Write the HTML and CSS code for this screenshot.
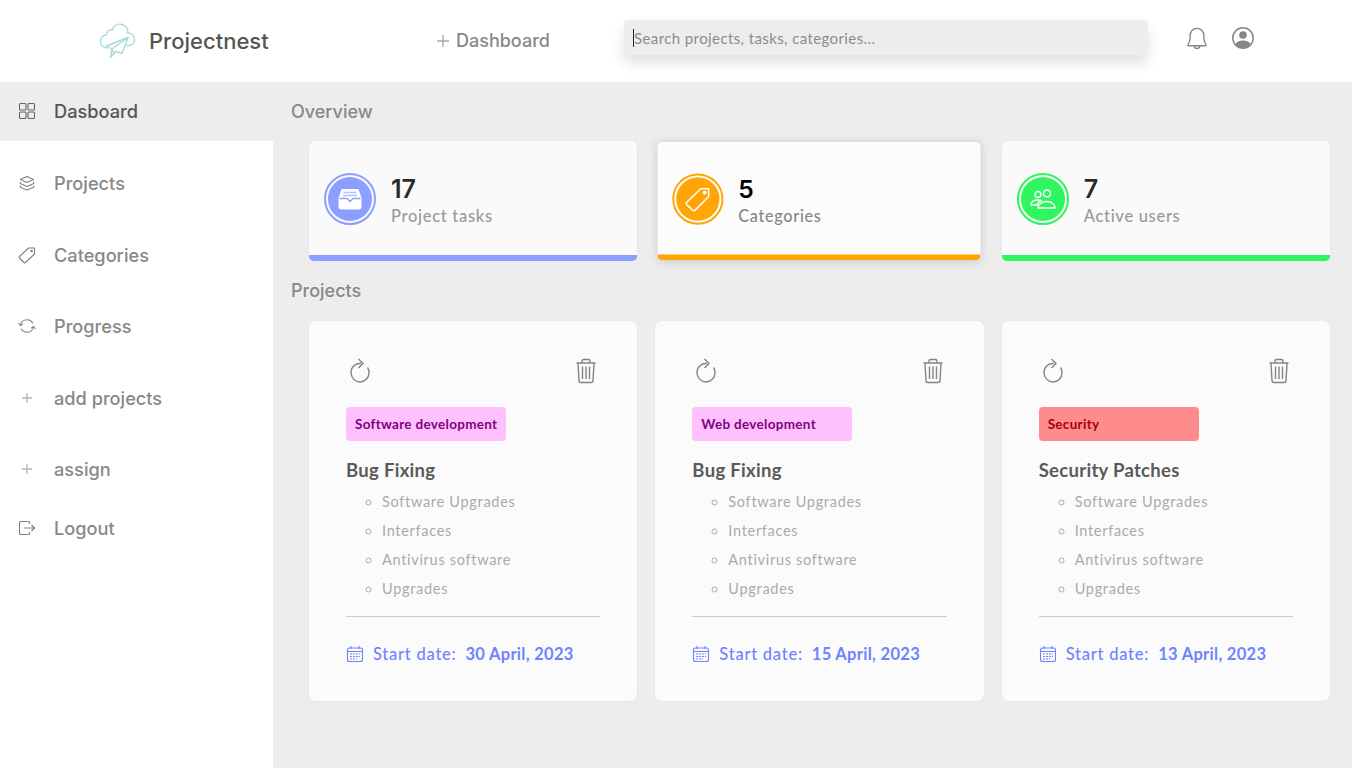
FILE: index.html
```html
<!DOCTYPE html>
<html lang="en">
<head>
    <meta charset="UTF-8">
    <meta name="viewport" content="width=device-width, initial-scale=1.0">
    <title>Projectnest</title>
    <link rel="stylesheet" href="styles.css">
</head>
<body>
    <header class="topbar">
        <a class="logo" href="#home">
            <svg class="logo-icon" width="38" height="38" viewBox="0 0 38 38" fill="none" stroke="#a9dada" stroke-width="1.4" stroke-linejoin="round" stroke-linecap="round">
                <path d="M8 26C3 25 1 22 1.500 18.500C2 15 4.500 13 7.500 13C8 8.500 11 7 13.500 8C15 3 19 1.500 23 2.500C27 3.500 29.500 7 28.500 11C32 10.500 35.500 13.500 35.500 17.500C35.500 20.500 33.500 23 30 23.500L28 23.500"/>
                <path d="M29 15.500L7.500 24L13 27L11.500 35.500L17 29.500L23 31.500Z"/>
                <path d="M29 15.500L13 27L14.500 31"/>
            </svg>
            <span>Projectnest</span>
        </a>
        <a class="top-link" href="#dashboard">
            <svg width="12" height="12" viewBox="0 0 12 12" stroke="#aaa" stroke-width="1.400"><path d="M6 0V12M0 6H12"/></svg>
            Dashboard
        </a>
        <div class="search">
            <span class="caret"></span>
            <input type="text" placeholder="Search projects, tasks, categories...">
        </div>
        <svg class="bell" width="22" height="24" viewBox="0 0 24 26" fill="none" stroke="#858585" stroke-width="1.500">
            <path d="M2 20.500C2 19 4.500 18.500 4.500 13V10.500C4.500 6 7.500 2.500 12 2.500C16.500 2.500 19.500 6 19.500 10.500V13C19.500 18.500 22 19 22 20.500C22 21.200 21.500 21.500 20.500 21.500H3.500C2.500 21.500 2 21.200 2 20.500Z" stroke-linejoin="round"/>
            <path d="M9 21.500C9 23.500 10.500 24.500 12 24.500C13.500 24.500 15 23.500 15 21.500"/>
        </svg>
        <svg class="user" width="24" height="24" viewBox="0 0 24 24">
            <circle cx="12" cy="12" r="10.200" fill="none" stroke="#858585" stroke-width="1.500"/>
            <circle cx="12" cy="9" r="3.800" fill="#858585"/>
            <path d="M4.500 18.500C5.500 15.500 8.500 14.500 12 14.500C15.500 14.500 18.500 15.500 19.500 18.500C17.500 20.800 15 22 12 22C9 22 6.500 20.800 4.500 18.500Z" fill="#858585"/>
        </svg>
    </header>

    <div class="layout">
        <nav class="sidebar">
            <a class="side-link active" href="#dashboard">
                <svg class="side-icon" width="18" height="18" viewBox="0 0 18 18" fill="none" stroke="#666" stroke-width="1.100">
                    <rect x="1.500" y="1.500" width="6.500" height="6.500" rx="1"/>
                    <rect x="10" y="1.500" width="6.500" height="6.500" rx="1"/>
                    <rect x="1.500" y="10" width="6.500" height="6.500" rx="1"/>
                    <rect x="10" y="10" width="6.500" height="6.500" rx="1"/>
                </svg>
                Dasboard
            </a>
            <a class="side-link" href="#projects">
                <svg class="side-icon" width="18" height="18" viewBox="0 0 18 18" fill="none" stroke="#808080" stroke-width="1.100" stroke-linejoin="round">
                    <path d="M9 2.500L15.500 5.500L9 8.500L2.500 5.500Z"/>
                    <path d="M2.800 8C2 8.600 2 9.400 2.800 9.800L9 12.500L15.200 9.800C16 9.400 16 8.600 15.200 8"/>
                    <path d="M2.800 11.800C2 12.400 2 13.200 2.800 13.600L9 16L15.200 13.600C16 13.200 16 12.400 15.200 11.800"/>
                </svg>
                Projects
            </a>
            <a class="side-link" href="#categories">
                <svg class="side-icon" width="18" height="18" viewBox="0 0 18 18" fill="none" stroke="#808080" stroke-width="1.100" stroke-linejoin="round">
                    <path d="M1.500 10.500L10.500 2H16.500V8L7.500 16.500C7 17 6.500 17 6 16.500L1.500 12C1 11.500 1 11 1.500 10.500Z"/>
                    <circle cx="13.500" cy="5" r="0.700"/>
                </svg>
                Categories
            </a>
            <a class="side-link" href="#progress">
                <svg class="side-icon" width="18" height="18" viewBox="0 0 18 18" fill="none" stroke="#808080" stroke-width="1.100" stroke-linecap="round" stroke-linejoin="round">
                    <path d="M2.500 8C3 5 5.800 2.800 9 2.800C11.500 2.800 13.500 4 14.800 6"/>
                    <path d="M15.500 10C15 13 12.200 15.200 9 15.200C6.500 15.200 4.500 14 3.200 12"/>
                    <path d="M0.800 6.500L2.500 8.500L4.500 7"/>
                    <path d="M17.200 11.500L15.500 9.500L13.500 11"/>
                </svg>
                Progress
            </a>
            <a class="side-link" href="#add">
                <svg class="side-icon" width="18" height="18" viewBox="0 0 18 18" stroke="#b5b5b5" stroke-width="1.300">
                    <path d="M4 9H14M9 4V14"/>
                </svg>
                add projects
            </a>
            <a class="side-link" href="#assign">
                <svg class="side-icon" width="18" height="18" viewBox="0 0 18 18" stroke="#b5b5b5" stroke-width="1.300">
                    <path d="M4 9H14M9 4V14"/>
                </svg>
                assign
            </a>
            <a class="side-link logout" href="#logout">
                <svg class="side-icon" width="18" height="18" viewBox="0 0 18 18" fill="none" stroke="#808080" stroke-width="1.100" stroke-linejoin="round">
                    <path d="M11.500 5V3.500C11.500 2.800 11 2.500 10.500 2.500H2.500C2 2.500 1.500 2.800 1.500 3.500V14.500C1.500 15.200 2 15.500 2.500 15.500H10.500C11 15.500 11.500 15.200 11.500 14.500V13"/>
                    <path d="M6 9H16.500M13.500 6L16.500 9L13.500 12"/>
                </svg>
                Logout
            </a>
        </nav>

        <main class="content">
            <h2 class="section-title">Overview</h2>
            <div class="stats">
                <div class="stat stat-blue">
                    <div class="stat-circle">
                        <svg width="26" height="24" viewBox="0 0 26 24" fill="#fff">
                            <path d="M4 3.500C4 2.700 4.700 2 5.500 2H20.500C21.300 2 22 2.700 22 3.500L24.500 11V20C24.500 21.500 23.500 22.500 22 22.500H4C2.500 22.500 1.500 21.500 1.500 20V11Z"/>
                            <path d="M6.500 5.500H19.500M6 8.500H20" stroke="#b4c0ff" stroke-width="1.300"/>
                            <path d="M2.500 11.500H10L13 14.500L16 11.500H23.500" fill="none" stroke="#8c9eff" stroke-width="1.300"/>
                        </svg>
                    </div>
                    <div class="stat-text">
                        <div class="stat-num">17</div>
                        <div class="stat-label">Project tasks</div>
                    </div>
                </div>
                <div class="stat stat-orange raised">
                    <div class="stat-circle">
                        <svg width="28" height="28" viewBox="0 0 28 28" fill="none" stroke="#fff" stroke-width="1.500" stroke-linejoin="round">
                            <path d="M2.500 17.500L17 3.500H25V11.500L11 25.500C10.500 26 9.500 26 9 25.500L2.500 19.500C2 19 2 18 2.500 17.500Z"/>
                            <circle cx="21" cy="7.500" r="1.200" fill="#fff"/>
                        </svg>
                    </div>
                    <div class="stat-text">
                        <div class="stat-num">5</div>
                        <div class="stat-label">Categories</div>
                    </div>
                </div>
                <div class="stat stat-green">
                    <div class="stat-circle">
                        <svg width="26" height="26" viewBox="0 0 26 26" fill="none" stroke="#fff" stroke-width="1.400">
                            <circle cx="8" cy="8.500" r="3"/>
                            <circle cx="17" cy="7.500" r="3.500"/>
                            <path d="M1 19C1 16 3.500 14 8 14C9.500 14 10.500 14.200 11.500 14.700C9 15.500 7.500 17 7.500 19Z" stroke-linejoin="round"/>
                            <path d="M8 22C8 18.500 11.500 15.500 17 15.500C22 15.500 25 18.500 25 22Z" stroke-linejoin="round"/>
                        </svg>
                    </div>
                    <div class="stat-text">
                        <div class="stat-num">7</div>
                        <div class="stat-label">Active users</div>
                    </div>
                </div>
            </div>

            <h2 class="section-title projects-title">Projects</h2>
            <div class="projects">
                <div class="project">
                    <div class="project-top">
                        <svg width="24" height="26" viewBox="0 0 24 26" fill="none" stroke="#858585" stroke-width="1.400">
                            <path d="M13 5.500C7.500 5 3 9 3 14.500C3 19.500 7 24 12 24C17 24 21 20 21 14.500C21 12.500 20.500 11 19.500 9.500"/>
                            <path d="M10.500 1L15 5.500L10.500 10"/>
                        </svg>
                        <svg width="24" height="26" viewBox="0 0 24 26" fill="none" stroke="#858585" stroke-width="1.400">
                            <path d="M2.500 5H21.500M8 5V3C8 2 8.800 1.500 9.500 1.500H14.500C15.200 1.500 16 2 16 3V5"/>
                            <path d="M4 5L5 22.500C5 23.800 6 24.500 7 24.500H17C18 24.500 19 23.800 19 22.500L20 5"/>
                            <path d="M8.500 8.500V21M12 8.500V21M15.500 8.500V21"/>
                        </svg>
                    </div>
                    <span class="tag tag-pink">Software development</span>
                    <h3 class="project-title">Bug Fixing</h3>
                    <ul class="project-list">
                        <li>Software Upgrades</li>
                        <li>Interfaces</li>
                        <li>Antivirus software</li>
                        <li>Upgrades</li>
                    </ul>
                    <div class="project-date">
                        <svg width="18" height="18" viewBox="0 0 18 18" fill="none" stroke="#6f83ff" stroke-width="1.100">
                            <rect x="1.500" y="3" width="15" height="13.500" rx="2"/>
                            <path d="M1.500 6.500H16.500M5 1V4M13 1V4"/>
                            <path d="M4 9H14M4 11.500H14M4 14H11" stroke-dasharray="2 1"/>
                        </svg>
                        <span>Start date:</span>
                        <b>30 April, 2023</b>
                    </div>
                </div>
                <div class="project">
                    <div class="project-top">
                        <svg width="24" height="26" viewBox="0 0 24 26" fill="none" stroke="#858585" stroke-width="1.400">
                            <path d="M13 5.500C7.500 5 3 9 3 14.500C3 19.500 7 24 12 24C17 24 21 20 21 14.500C21 12.500 20.500 11 19.500 9.500"/>
                            <path d="M10.500 1L15 5.500L10.500 10"/>
                        </svg>
                        <svg width="24" height="26" viewBox="0 0 24 26" fill="none" stroke="#858585" stroke-width="1.400">
                            <path d="M2.500 5H21.500M8 5V3C8 2 8.800 1.500 9.500 1.500H14.500C15.200 1.500 16 2 16 3V5"/>
                            <path d="M4 5L5 22.500C5 23.800 6 24.500 7 24.500H17C18 24.500 19 23.800 19 22.500L20 5"/>
                            <path d="M8.500 8.500V21M12 8.500V21M15.500 8.500V21"/>
                        </svg>
                    </div>
                    <span class="tag tag-pink">Web development</span>
                    <h3 class="project-title">Bug Fixing</h3>
                    <ul class="project-list">
                        <li>Software Upgrades</li>
                        <li>Interfaces</li>
                        <li>Antivirus software</li>
                        <li>Upgrades</li>
                    </ul>
                    <div class="project-date">
                        <svg width="18" height="18" viewBox="0 0 18 18" fill="none" stroke="#6f83ff" stroke-width="1.100">
                            <rect x="1.500" y="3" width="15" height="13.500" rx="2"/>
                            <path d="M1.500 6.500H16.500M5 1V4M13 1V4"/>
                            <path d="M4 9H14M4 11.500H14M4 14H11" stroke-dasharray="2 1"/>
                        </svg>
                        <span>Start date:</span>
                        <b>15 April, 2023</b>
                    </div>
                </div>
                <div class="project">
                    <div class="project-top">
                        <svg width="24" height="26" viewBox="0 0 24 26" fill="none" stroke="#858585" stroke-width="1.400">
                            <path d="M13 5.500C7.500 5 3 9 3 14.500C3 19.500 7 24 12 24C17 24 21 20 21 14.500C21 12.500 20.500 11 19.500 9.500"/>
                            <path d="M10.500 1L15 5.500L10.500 10"/>
                        </svg>
                        <svg width="24" height="26" viewBox="0 0 24 26" fill="none" stroke="#858585" stroke-width="1.400">
                            <path d="M2.500 5H21.500M8 5V3C8 2 8.800 1.500 9.500 1.500H14.500C15.200 1.500 16 2 16 3V5"/>
                            <path d="M4 5L5 22.500C5 23.800 6 24.500 7 24.500H17C18 24.500 19 23.800 19 22.500L20 5"/>
                            <path d="M8.500 8.500V21M12 8.500V21M15.500 8.500V21"/>
                        </svg>
                    </div>
                    <span class="tag tag-red">Security</span>
                    <h3 class="project-title">Security Patches</h3>
                    <ul class="project-list">
                        <li>Software Upgrades</li>
                        <li>Interfaces</li>
                        <li>Antivirus software</li>
                        <li>Upgrades</li>
                    </ul>
                    <div class="project-date">
                        <svg width="18" height="18" viewBox="0 0 18 18" fill="none" stroke="#6f83ff" stroke-width="1.100">
                            <rect x="1.500" y="3" width="15" height="13.500" rx="2"/>
                            <path d="M1.500 6.500H16.500M5 1V4M13 1V4"/>
                            <path d="M4 9H14M4 11.500H14M4 14H11" stroke-dasharray="2 1"/>
                        </svg>
                        <span>Start date:</span>
                        <b>13 April, 2023</b>
                    </div>
                </div>
            </div>
        </main>
    </div>
</body>
</html>
```

FILE: styles.css
```css
body {
    font-family: "Lato", "Open Sans", sans-serif;
    background-color: #ededed;
    margin: 0;
    height: 768px;
    overflow: hidden;
}

a {
    text-decoration: none;
}

.topbar {
    height: 82px;
    background-color: white;
    display: flex;
    align-items: center;
    padding-left: 99px;
    box-sizing: border-box;
}

.logo {
    display: flex;
    align-items: center;
    gap: 12px;
    width: 338px;
    color: #555;
    font-family: "Inter", sans-serif;
    font-size: 22px;
    font-weight: 500;
}

.top-link {
    width: 187px;
    margin-top: -1px;
    display: flex;
    align-items: center;
    gap: 7px;
    color: #888;
    font-family: "Inter", sans-serif;
    font-size: 18px;
    font-weight: 500;
}

.search {
    width: 524px;
    height: 35px;
    margin-top: -7px;
    margin-right: 38px;
    padding-left: 9px;
    box-sizing: border-box;
    display: flex;
    align-items: center;
    background-color: #ededed;
    border-radius: 4px;
    box-shadow: 0 8px 14px rgba(0, 0, 0, 0.12);
}

.caret {
    width: 1px;
    height: 18px;
    background-color: #222;
}

.search input {
    flex: 1;
    border: none;
    outline: none;
    padding: 0;
    background: none;
    font-family: "Lato", sans-serif;
    font-size: 15px;
    letter-spacing: 0.4px;
}

.search input::placeholder {
    color: #8c8c8c;
    opacity: 1;
}

.bell {
    margin-top: -7px;
    margin-right: 23px;
}

.user {
    margin-top: -7px;
}

.layout {
    display: flex;
    height: 686px;
}

.sidebar {
    width: 273px;
    flex-shrink: 0;
    background-color: white;
}

.side-link {
    height: 71.5px;
    box-sizing: border-box;
    padding-bottom: 0.5px;
    display: flex;
    align-items: center;
    gap: 18px;
    padding-left: 18px;
    color: #888;
    font-family: "Inter", sans-serif;
    font-size: 18.2px;
    font-weight: 500;
}

.side-link.active {
    height: 59px;
    margin-bottom: 6.5px;
    background-color: #ededed;
    color: #555;
}

.side-link.logout {
    height: 47px;
}

.side-icon {
    flex-shrink: 0;
}

.content {
    flex: 1;
    min-width: 0;
    padding: 18px 22px 0 18px;
}

.section-title {
    margin: 0 0 17px;
    color: #888;
    font-family: "Inter", sans-serif;
    font-size: 18px;
    font-weight: 500;
    line-height: 24px;
}

.projects-title {
    margin: 18px 0 18px;
}

.stats, .projects {
    display: grid;
    grid-template-columns: repeat(3, minmax(0, 1fr));
    gap: 18px;
    margin-left: 18px;
}

.stat {
    height: 120px;
    box-sizing: border-box;
    display: flex;
    align-items: center;
    gap: 15px;
    padding: 2px 15px 0;
    background-color: #fafafa;
    border-bottom: 6px solid;
    border-radius: 5px;
    box-shadow: 0 0 1px rgba(0, 0, 0, 0.15);
}

.stat-text {
    margin-top: 4px;
}

.stat-circle {
    width: 52px;
    height: 52px;
    box-sizing: border-box;
    flex-shrink: 0;
    display: flex;
    align-items: center;
    justify-content: center;
    border-radius: 50%;
    border: 2px solid;
    padding: 2px;
    background-clip: content-box;
}

.stat-blue { border-bottom-color: #8c9eff; }
.stat-blue .stat-circle { background-color: #8c9eff; border-color: #8c9eff; }

.stat-orange { border-bottom-color: #ffa505; }
.stat-orange .stat-circle { background-color: #ffa505; border-color: #ffa505; }

.stat-green { border-bottom-color: #2ff55f; }
.stat-green .stat-circle { background-color: #2ff55f; border-color: #2ff55f; }

.stat-num {
    color: #2b2b2b;
    font-family: "Inter", sans-serif;
    font-size: 25px;
    font-weight: 600;
    line-height: 30px;
}

.stat-label {
    color: #999;
    font-size: 16.5px;
    font-weight: 500;
    letter-spacing: 0.7px;
    line-height: 24px;
}

.raised {
    transform: scale(0.985);
    background-color: #fcfcfc;
    box-shadow: 0 1px 10px rgba(0, 0, 0, 0.14);
}

.raised .stat-num {
    color: #000;
}

.raised .stat-label {
    color: #858585;
}

.project {
    height: 380px;
    box-sizing: border-box;
    padding: 37px 37px 0;
    background-color: #fbfbfb;
    border-radius: 6px;
    box-shadow: 0 0 1px rgba(0, 0, 0, 0.15);
}

.project-top {
    height: 26px;
    margin-bottom: 23px;
    padding: 0 2px;
    display: flex;
    justify-content: space-between;
}

.tag {
    display: block;
    width: 160px;
    height: 34px;
    box-sizing: border-box;
    padding-left: 9px;
    border-radius: 4px;
    font-size: 13.5px;
    font-weight: 700;
    letter-spacing: 0.3px;
    line-height: 34px;
}

.tag-pink {
    background-color: #ffc0ff;
    color: #800080;
}

.tag-red {
    background-color: #ff8c8c;
    color: #a80000;
}

.project-title {
    margin: 17px 0 5px;
    color: #5a5a5a;
    font-size: 18.5px;
    font-weight: 700;
    letter-spacing: 0.3px;
    line-height: 24px;
}

.project-list {
    margin: 0;
    padding: 0 0 13px 36px;
    list-style: circle;
    border-bottom: 1px solid #ccc;
    color: #aaa;
    font-size: 14.5px;
    letter-spacing: 0.7px;
}

.project-list li {
    height: 29px;
    line-height: 29px;
}

.project-list li::marker {
    color: #aaa;
}

.project-date {
    margin-top: 25px;
    display: flex;
    align-items: center;
    color: #6f83ff;
    font-size: 16.5px;
    font-weight: 500;
    line-height: 24px;
    white-space: nowrap;
}

.project-date svg {
    margin-right: 9px;
}

.project-date span {
    letter-spacing: 0.75px;
}

.project-date b {
    margin-left: 9px;
    font-weight: 700;
    letter-spacing: 0.3px;
}
```
